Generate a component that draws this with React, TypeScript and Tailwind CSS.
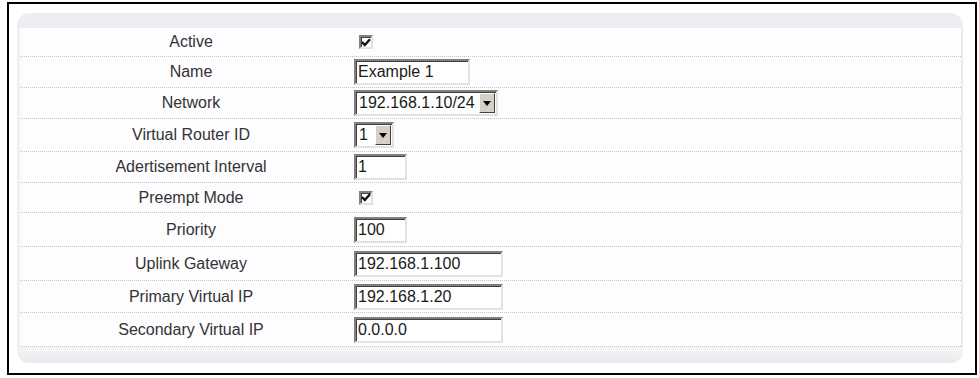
const FONT = { fontFamily: '"Liberation Sans", Arial, sans-serif' }

type Control =
  | { kind: 'check' }
  | { kind: 'text'; value: string; width: number }
  | { kind: 'select'; value: string; width: number }

interface Row {
  label: string
  height: number
  control: Control
}

const rows: Row[] = [
  { label: 'Active', height: 29, control: { kind: 'check' } },
  { label: 'Name', height: 31, control: { kind: 'text', value: 'Example 1', width: 116 } },
  { label: 'Network', height: 31, control: { kind: 'select', value: '192.168.1.10/24', width: 144 } },
  { label: 'Virtual Router ID', height: 33, control: { kind: 'select', value: '1', width: 40 } },
  { label: 'Adertisement Interval', height: 31, control: { kind: 'text', value: '1', width: 53 } },
  { label: 'Preempt Mode', height: 30, control: { kind: 'check' } },
  { label: 'Priority', height: 34, control: { kind: 'text', value: '100', width: 53 } },
  { label: 'Uplink Gateway', height: 34, control: { kind: 'text', value: '192.168.1.100', width: 149 } },
  { label: 'Primary Virtual IP', height: 32, control: { kind: 'text', value: '192.168.1.20', width: 149 } },
  { label: 'Secondary Virtual IP', height: 34, control: { kind: 'text', value: '0.0.0.0', width: 149 } },
]

const sunken =
  'border-2 border-t-[#808080] border-l-[#808080] border-b-[#e4e2e0] border-r-[#e4e2e0] shadow-[inset_1px_1px_0_#404040]'

function Checkbox() {
  return (
    <div className={`ml-[5px] w-[14px] h-[14px] bg-white flex items-center justify-center ${sunken}`}>
      <svg width="10" height="9" viewBox="0 0 10 9">
        <path d="M1 4 L3.8 7 L9 1.2" stroke="#111" strokeWidth="2.4" fill="none" />
      </svg>
    </div>
  )
}

function TextBox({ value, width }: { value: string; width: number }) {
  return (
    <div
      className={`h-[26px] bg-white flex items-center pl-[2px] text-[16px] text-[#1a1a1a] leading-none ${sunken}`}
      style={{ width }}
    >
      {value}
    </div>
  )
}

function SelectBox({ value, width }: { value: string; width: number }) {
  return (
    <div
      className={`h-[26px] bg-white flex items-center justify-between pl-[3px] text-[16px] text-[#1a1a1a] leading-none ${sunken}`}
      style={{ width }}
    >
      <span>{value}</span>
      <div className="w-[16px] h-[20px] mr-[1px] bg-[#d4d0c8] border border-t-white border-l-white border-b-[#404040] border-r-[#404040] flex items-center justify-center">
        <svg width="8" height="5" viewBox="0 0 8 5">
          <path d="M0 0 H8 L4 5 Z" fill="#000" />
        </svg>
      </div>
    </div>
  )
}

export default function App() {
  return (
    <div className="w-[979px] h-[378px] bg-white overflow-hidden" style={FONT}>
      <div className="ml-[7px] mt-[2px] w-[970px] h-[373px] border-2 border-black pl-[8px] pt-[9px]">
        <div className="w-[946px] h-[350px] flex flex-col">
          <div className="h-[15px] rounded-t-[12px] bg-[#efedf1]" />
          <div className="bg-[#fdfcfe] border-l-[3px] border-l-[#f1f0f3] border-r-2 border-r-[#eceaee]">
            {rows.map(row => (
              <div
                key={row.label}
                className="flex items-center border-b border-dotted border-b-[#c2c2c6]"
                style={{ height: row.height }}
              >
                <div className="w-[334px] pl-[8px] text-center text-[16px] text-[#333]">{row.label}</div>
                <div className="flex items-center">
                  {row.control.kind === 'check' && <Checkbox />}
                  {row.control.kind === 'text' && (
                    <TextBox value={row.control.value} width={row.control.width} />
                  )}
                  {row.control.kind === 'select' && (
                    <SelectBox value={row.control.value} width={row.control.width} />
                  )}
                </div>
              </div>
            ))}
          </div>
          <div className="h-[16px] rounded-b-[12px] bg-gradient-to-b from-[#f5f4f7] to-[#ebe9ed]" />
        </div>
      </div>
    </div>
  )
}
